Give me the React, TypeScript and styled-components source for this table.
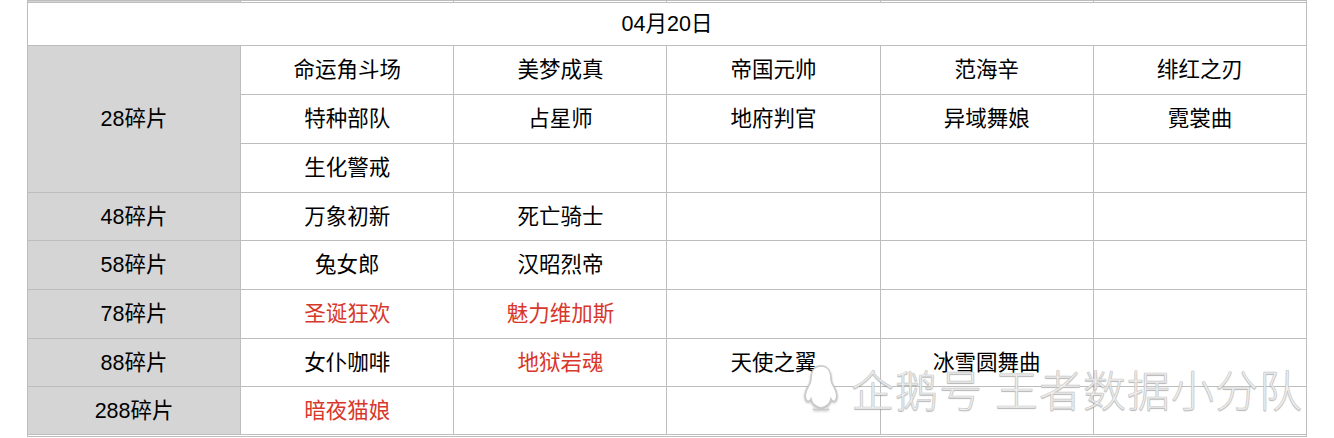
import styled, { createGlobalStyle } from 'styled-components'

const GlobalStyle = createGlobalStyle`
  html, body {
    margin: 0;
    padding: 0;
    background: #ffffff;
  }
  body {
    font-family: 'Liberation Sans', 'Noto Sans CJK SC', sans-serif;
    color: #000000;
  }
`

type Item = { name: string; red?: boolean }

const groups: { label: string; rows: Item[][] }[] = [
  {
    label: '28碎片',
    rows: [
      [{ name: '命运角斗场' }, { name: '美梦成真' }, { name: '帝国元帅' }, { name: '范海辛' }, { name: '绯红之刃' }],
      [{ name: '特种部队' }, { name: '占星师' }, { name: '地府判官' }, { name: '异域舞娘' }, { name: '霓裳曲' }],
      [{ name: '生化警戒' }],
    ],
  },
  { label: '48碎片', rows: [[{ name: '万象初新' }, { name: '死亡骑士' }]] },
  { label: '58碎片', rows: [[{ name: '兔女郎' }, { name: '汉昭烈帝' }]] },
  { label: '78碎片', rows: [[{ name: '圣诞狂欢', red: true }, { name: '魅力维加斯', red: true }]] },
  {
    label: '88碎片',
    rows: [[{ name: '女仆咖啡' }, { name: '地狱岩魂', red: true }, { name: '天使之翼' }, { name: '冰雪圆舞曲' }]],
  },
  { label: '288碎片', rows: [[{ name: '暗夜猫娘', red: true }]] },
]

const rowHeights = [49, 49, 49, 48, 49, 49, 48, 48]

const App = () => {
  let rowIndex = 0
  return (
    <>
      <GlobalStyle />
      <Page>
        <Table>
          <colgroup>
            {Array.from({ length: 6 }).map((_, i) => (
              <Col key={i} />
            ))}
          </colgroup>
          <tbody>
            <StubRow>
              <Cell $label />
              <Cell />
              <Cell />
              <Cell />
              <Cell />
              <Cell />
            </StubRow>
            <DateRow>
              <Cell colSpan={6}>04月20日</Cell>
            </DateRow>
            {groups.map((g) =>
              g.rows.map((items, r) => {
                const h = rowHeights[rowIndex++]
                return (
                  <tr key={g.label + r} style={{ height: h }}>
                    {r === 0 && (
                      <Cell $label rowSpan={g.rows.length}>
                        {g.label}
                      </Cell>
                    )}
                    {Array.from({ length: 5 }).map((_, c) => (
                      <Cell key={c} $red={items[c]?.red}>
                        {items[c]?.name ?? ''}
                      </Cell>
                    ))}
                  </tr>
                )
              })
            )}
            <StubRow>
              <Cell colSpan={6} />
            </StubRow>
          </tbody>
        </Table>
        <Watermark>
          <Penguin viewBox="0 0 34 50" width="36" height="50">
            <path
              d="M17 3c-7 0-10 6-10 13 0 3-1 5-3 8-3 5-4 11-1 14 1 1 3 0 4-2 1 5 4 8 10 9 6-1 9-4 10-9 1 2 3 3 4 2 3-3 2-9-1-14-2-3-3-5-3-8 0-7-3-13-10-13z"
              fill="#ffffff"
              stroke="#c9c9c9"
              strokeWidth="1.6"
            />
            <path d="M9 46c2 1 6 1 8 0M17 46c2 1 6 1 8 0" fill="none" stroke="#c9c9c9" strokeWidth="1.6" />
          </Penguin>
          <MarkText>企鹅号</MarkText>
          <MarkText>王者数据小分队</MarkText>
        </Watermark>
      </Page>
    </>
  )
}

const Page = styled.div`
  position: relative;
  width: 1334px;
  height: 438px;
  overflow: hidden;
`

const Table = styled.table`
  margin-left: 27px;
  width: 1280px;
  table-layout: fixed;
  border-collapse: collapse;
`

const Col = styled.col`
  width: 213px;
`

const Cell = styled.td<{ $label?: boolean; $red?: boolean }>`
  border: 1px solid #bdbdbd;
  padding: 0;
  text-align: center;
  vertical-align: middle;
  font-size: 21.5px;
  line-height: 24px;
  background: ${(p) => (p.$label ? '#d5d5d5' : '#ffffff')};
  color: ${(p) => (p.$red ? '#d8382c' : '#000000')};
`

const StubRow = styled.tr`
  height: 2px;
  & > td {
    line-height: 0;
    font-size: 0;
  }
`

const DateRow = styled.tr`
  height: 43px;
`

const Watermark = styled.div`
  position: absolute;
  left: 803px;
  top: 363px;
  display: flex;
  align-items: center;
  gap: 12px;
  pointer-events: none;
`

const Penguin = styled.svg`
  display: block;
  filter: drop-shadow(0 1px 1px rgba(0, 0, 0, 0.25));
`

const MarkText = styled.span`
  font-family: 'Noto Sans CJK SC', sans-serif;
  font-weight: 300;
  font-size: 43px;
  line-height: 50px;
  color: #f0f0f0;
  -webkit-text-stroke: 0.6px #c8c8c8;
  text-shadow: 0 1px 1px rgba(0, 0, 0, 0.3);
  letter-spacing: 1px;
`

export default App
